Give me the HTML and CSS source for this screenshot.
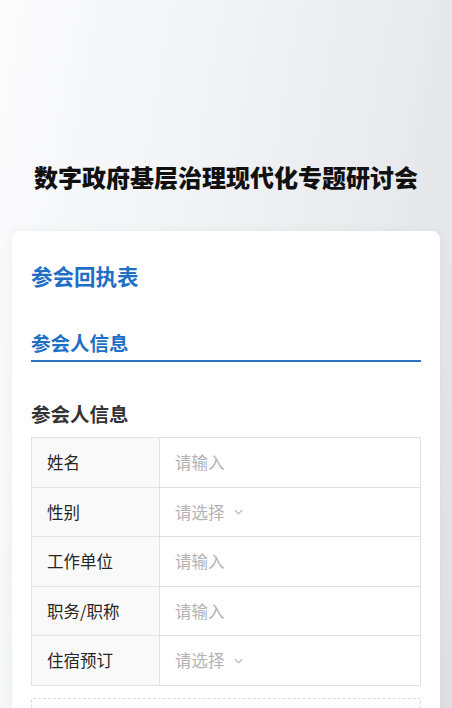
FILE: index.html
```html
<!DOCTYPE html>
<html lang="zh-CN">
<head>
  <meta charset="UTF-8">
  <meta name="viewport" content="width=device-width, initial-scale=1.0">
  <title>参会回执表</title>
  <link rel="stylesheet" href="styles.css">
</head>
<body>
  <header class="banner">
    <h1>数字政府基层治理现代化专题研讨会</h1>
  </header>

  <section class="card">
    <h2 class="card-title">参会回执表</h2>
    <div class="tab">参会人信息</div>

    <h3 class="group-title">参会人信息</h3>
    <div class="form-table">
      <div class="row">
        <div class="label">姓名</div>
        <div class="value">请输入</div>
      </div>
      <div class="row">
        <div class="label">性别</div>
        <div class="value">请选择
          <svg class="chevron" viewBox="0 0 10 6" width="9" height="6"><path d="M1 1l4 4 4-4" fill="none" stroke="#aaa" stroke-width="1.2"/></svg>
        </div>
      </div>
      <div class="row">
        <div class="label">工作单位</div>
        <div class="value">请输入</div>
      </div>
      <div class="row">
        <div class="label">职务/职称</div>
        <div class="value">请输入</div>
      </div>
      <div class="row">
        <div class="label">住宿预订</div>
        <div class="value">请选择
          <svg class="chevron" viewBox="0 0 10 6" width="9" height="6"><path d="M1 1l4 4 4-4" fill="none" stroke="#aaa" stroke-width="1.2"/></svg>
        </div>
      </div>
    </div>

    <div class="add-box"></div>
  </section>
</body>
</html>
```

FILE: styles.css
```css
body {
  margin: 0;
  min-height: 708px;
  background: linear-gradient(100deg, #fbfbfc 0%, #f3f4f6 35%, #e6e7ea 80%, #dddee2 100%);
  font-family: "Noto Sans CJK SC", "Noto Sans", sans-serif;
  color: #333;
}
.banner {
  padding: 160px 0 37px;
  text-align: center;
}
.banner h1 {
  margin: 0;
  font-size: 24px;
  line-height: 34px;
  font-weight: 900;
  color: #111;
}
.card {
  margin: 0 12px;
  padding: 30px 19px 40px;
  background-color: #fff;
  border-radius: 8px 8px 0 0;
  box-shadow: 0 0 10px rgba(0, 0, 0, 0.05);
}
.card-title {
  margin: 0;
  font-size: 21.5px;
  line-height: 30px;
  font-weight: 700;
  color: #1e6fc5;
}
.tab {
  margin-top: 38px;
  padding-bottom: 3px;
  border-bottom: 2px solid #2a72c2;
  font-size: 19.5px;
  line-height: 28px;
  font-weight: 700;
  color: #1e6fc5;
}
.group-title {
  margin: 38px 0 9px;
  font-size: 19.5px;
  line-height: 28px;
  font-weight: 700;
  color: #333;
}
.form-table {
  border: 1px solid #e2e2e2;
  border-bottom: none;
}
.row {
  display: flex;
  height: 48.5px;
  border-bottom: 1px solid #e2e2e2;
}
.label {
  width: 112px;
  flex-shrink: 0;
  display: flex;
  align-items: center;
  padding-left: 15px;
  background-color: #f9f9f9;
  border-right: 1px solid #e2e2e2;
  font-size: 16.5px;
  color: #262626;
}
.value {
  flex: 1;
  display: flex;
  align-items: center;
  padding-left: 15px;
  font-size: 16.5px;
  color: #b3b3b3;
}
.chevron {
  margin-left: 9px;
  margin-top: 1px;
}
.add-box {
  margin-top: 12px;
  height: 90px;
  border: 1px dashed #dcdcdc;
  border-radius: 2px;
}
```
